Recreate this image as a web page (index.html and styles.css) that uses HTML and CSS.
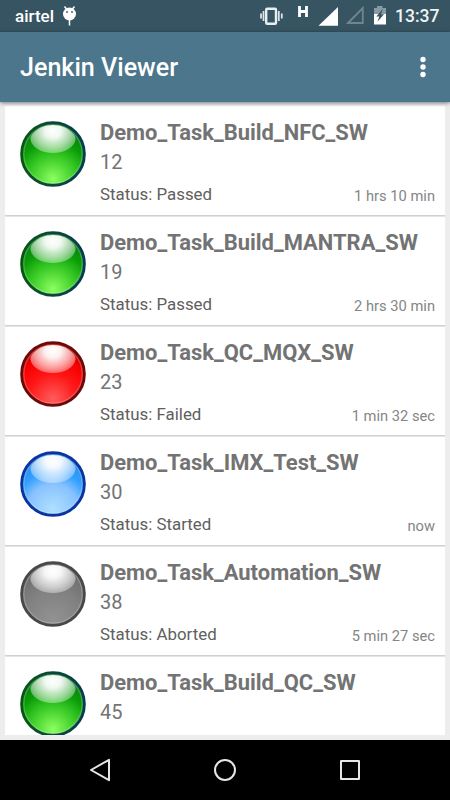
FILE: index.html
```html
<!DOCTYPE html>
<html lang="en">
<head>
<meta charset="utf-8">
<title>Jenkin Viewer</title>
<link rel="stylesheet" href="styles.css">
</head>
<body>
<svg class="defs" width="0" height="0" aria-hidden="true">
  <defs>
    <radialGradient id="fill-green" cx=".5" cy=".9" r=".8"><stop offset="0" stop-color="#8cff60"/><stop offset=".5" stop-color="#31c420"/><stop offset=".75" stop-color="#0a9c08"/><stop offset="1" stop-color="#078010"/></radialGradient>
    <radialGradient id="fill-red" cx=".5" cy=".9" r=".8"><stop offset="0" stop-color="#ff5c5c"/><stop offset=".5" stop-color="#ff1616"/><stop offset=".8" stop-color="#f80000"/><stop offset="1" stop-color="#d00000"/></radialGradient>
    <radialGradient id="fill-blue" cx=".5" cy=".9" r=".8"><stop offset="0" stop-color="#b0e0ff"/><stop offset=".5" stop-color="#88c2ff"/><stop offset=".75" stop-color="#319fff"/><stop offset="1" stop-color="#2c8cec"/></radialGradient>
    <radialGradient id="fill-gray" cx=".5" cy=".9" r=".8"><stop offset="0" stop-color="#929292"/><stop offset=".6" stop-color="#808080"/><stop offset="1" stop-color="#6c6c6c"/></radialGradient>
    <linearGradient id="rim-green"><stop offset="0" stop-color="#07580f"/><stop offset=".4" stop-color="#0b4838"/><stop offset="1" stop-color="#063c50"/></linearGradient>
    <radialGradient id="gloss" gradientUnits="userSpaceOnUse" cx="0" cy="0" r="1" gradientTransform="translate(33 10) scale(27 23)"><stop offset="0" stop-color="#fff"/><stop offset=".3" stop-color="#fff" stop-opacity=".94"/><stop offset=".7" stop-color="#fff" stop-opacity=".62"/><stop offset="1" stop-color="#fff" stop-opacity=".32"/></radialGradient>
    <symbol id="shine" viewBox="0 0 66 66"><path d="M33 4C25 4 17.500 7.200 12.500 13C11 15 10.300 16.500 10.500 18.500C11.500 26 20.500 32 33 32S54.500 26 55.500 18.500C55.700 16.500 55 15 53.500 13C48.500 7.200 41 4 33 4Z" fill="url(#gloss)"/><circle cx="33" cy="33" r="29.300" fill="none" stroke="#fff" stroke-opacity=".22" stroke-width="1.500"/></symbol>
  </defs>
</svg>
<div class="screen">
  <header class="status-bar">
    <span class="carrier">airtel</span>
    <svg class="droid" width="16" height="22" viewBox="0 0 16 22"><path d="M2.500 1.500L4.500 4M12.500 1.500L10.500 4M7.500 15V20.500" stroke="#fff" stroke-width="1.500"/><circle cx="7.500" cy="9" r="6.500" fill="#fff"/><circle cx="5" cy="7" r=".9" fill="#365462"/><circle cx="10" cy="7" r=".9" fill="#365462"/></svg>
    <svg class="indicators" width="130" height="32" viewBox="260 0 130 32">
      <rect x="266.200" y="8.700" width="9.800" height="15" rx="1" fill="none" stroke="#e9eef0" stroke-width="2.400"/>
      <path d="M263.500 11v10M278.800 11v10M261 13.500v5M281.800 13.500v5" stroke="#dbe2e5" stroke-width="1.800"/>
      <path d="M299.500 6V17M306.500 6V17M299 11.500H307" stroke="#fff" stroke-width="2.800"/>
      <path d="M318.500 25.700L338 7V25.700Z" fill="#fff"/>
      <path d="M348 23L362.800 8V23Z" fill="none" stroke="#6f858f" stroke-width="1.800"/>
      <path d="M374 14V8H377V6H382.500V8H386V14Z" fill="#8999a1"/><path d="M374 14H386V24.500H374Z" fill="#fff"/>
      <path d="M382.800 9L376.300 16.500H379.300L377.500 21.800L384 14.200H381Z" fill="#365462"/>
    </svg>
    <time class="clock">13:37</time>
  </header>
  <div class="app-bar">
    <h1>Jenkin Viewer</h1>
    <svg width="8" height="24" viewBox="0 0 8 24" fill="#fff"><circle cx="4" cy="4.500" r="2.700"/><circle cx="4" cy="12" r="2.700"/><circle cx="4" cy="19.500" r="2.700"/></svg>
  </div>
  <main class="content">
    <ul class="jobs">
      <li class="job">
        <svg class="ball" viewBox="0 0 66 66"><circle cx="33" cy="33" r="31.300" fill="url(#fill-green)" stroke="url(#rim-green)" stroke-width="3"/><use href="#shine"/></svg>
        <div class="info"><h2>Demo_Task_Build_NFC_SW</h2><p class="build">12</p><div class="meta"><span>Status: Passed</span><span class="age">1 hrs 10 min</span></div></div>
      </li>
      <li class="job">
        <svg class="ball" viewBox="0 0 66 66"><circle cx="33" cy="33" r="31.300" fill="url(#fill-green)" stroke="url(#rim-green)" stroke-width="3"/><use href="#shine"/></svg>
        <div class="info"><h2>Demo_Task_Build_MANTRA_SW</h2><p class="build">19</p><div class="meta"><span>Status: Passed</span><span class="age">2 hrs 30 min</span></div></div>
      </li>
      <li class="job">
        <svg class="ball" viewBox="0 0 66 66"><circle cx="33" cy="33" r="31.300" fill="url(#fill-red)" stroke="#6c0808" stroke-width="3"/><use href="#shine"/></svg>
        <div class="info"><h2>Demo_Task_QC_MQX_SW</h2><p class="build">23</p><div class="meta"><span>Status: Failed</span><span class="age">1 min 32 sec</span></div></div>
      </li>
      <li class="job">
        <svg class="ball" viewBox="0 0 66 66"><circle cx="33" cy="33" r="31.300" fill="url(#fill-blue)" stroke="#0a35a0" stroke-width="3"/><use href="#shine"/></svg>
        <div class="info"><h2>Demo_Task_IMX_Test_SW</h2><p class="build">30</p><div class="meta"><span>Status: Started</span><span class="age">now</span></div></div>
      </li>
      <li class="job">
        <svg class="ball" viewBox="0 0 66 66"><circle cx="33" cy="33" r="31.300" fill="url(#fill-gray)" stroke="#484848" stroke-width="3"/><use href="#shine"/></svg>
        <div class="info"><h2>Demo_Task_Automation_SW</h2><p class="build">38</p><div class="meta"><span>Status: Aborted</span><span class="age">5 min 27 sec</span></div></div>
      </li>
      <li class="job">
        <svg class="ball" viewBox="0 0 66 66"><circle cx="33" cy="33" r="31.300" fill="url(#fill-green)" stroke="url(#rim-green)" stroke-width="3"/><use href="#shine"/></svg>
        <div class="info"><h2>Demo_Task_Build_QC_SW</h2><p class="build">45</p></div>
      </li>
    </ul>
  </main>
  <nav class="nav-bar">
    <svg width="26" height="26" viewBox="0 0 26 26"><path d="M22 2.800V23.200L4 13Z"/></svg>
    <svg width="26" height="26" viewBox="0 0 26 26"><circle cx="13" cy="13" r="10"/></svg>
    <svg width="26" height="26" viewBox="0 0 26 26"><rect x="4" y="4" width="18" height="18"/></svg>
  </nav>
</div>
</body>
</html>
```
FILE: styles.css
```css
* { box-sizing: border-box; margin: 0; padding: 0; }
body { width: 450px; height: 800px; overflow: hidden; font-family: Roboto, "Liberation Sans", sans-serif; }
.defs { position: absolute; }
.screen { display: flex; flex-direction: column; height: 800px; background: #ededed; }
.status-bar { display: flex; align-items: center; height: 32px; padding: 0 10.5px 0 15px; background: #365462; color: #fff; font-size: 17px; font-weight: 500; }
.droid { margin-left: 8px; }
.indicators { margin-left: auto; margin-right: 5px; }
.clock { font-size: 17.5px; color: #f1f4f5; }
.app-bar { display: flex; align-items: center; justify-content: space-between; flex: none; height: 70px; padding: 0 23.5px 0 20px; background: #4c768c; box-shadow: 0 1px 4px rgba(0, 0, 0, .5); color: #fff; z-index: 1; }
.app-bar h1 { font-size: 25.1px; font-weight: 500; line-height: 30px; margin-top: 1px; }
.content { flex: 1; min-height: 0; padding: 4px 5px 5px; }
.jobs { height: 100%; overflow: hidden; background: #fff; list-style: none; }
.job { display: flex; height: 110px; padding: 15px 10px 0 15px; border-bottom: 1px solid #d0d0d0; }
.job + .job { box-shadow: inset 0 1px #e4e4e4; }
.ball { flex: none; width: 66px; height: 66px; margin-right: 14px; }
.info { flex: 1; color: #737373; }
.info h2 { font-size: 21.95px; font-weight: 700; line-height: 26px; margin-top: -1px; white-space: nowrap; }
.build { font-size: 20px; line-height: 24px; margin-top: 4px; }
.meta { display: flex; justify-content: space-between; margin-top: 10px; font-size: 16.88px; line-height: 20px; color: #606060; }
.age { font-size: 14.7px; line-height: 24px; color: #858585; }
.nav-bar { display: flex; align-items: center; justify-content: center; gap: 99px; flex: none; height: 60px; background: #000; }
.nav-bar svg { fill: none; stroke: #e6e6e6; stroke-width: 2; stroke-linejoin: round; }
```
